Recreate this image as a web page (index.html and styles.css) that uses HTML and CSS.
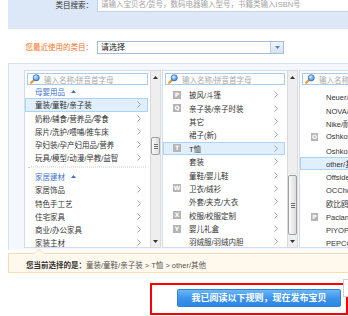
FILE: index.html
```html
<!DOCTYPE html>
<html lang="zh-CN">
<head>
<meta charset="utf-8">
<title>类目选择</title>
<link rel="stylesheet" href="styles.css">
</head>
<body>
<div class="page">
  <div class="search-bar">
    <span class="label">类目搜索：</span>
    <div class="search-input">请输入宝贝名/货号，数码电器输入型号，书籍类输入ISBN号</div>
  </div>

  <div class="recent">
    <span class="label orange">您最近使用的类目：</span>
    <div class="select">
      <span class="sel-text">请选择</span>
      <span class="sel-btn"><svg width="5" height="3" viewBox="0 0 5 3"><path d="M0 0H5L2.5 3Z" fill="#5b7fb3"/></svg></span>
    </div>
  </div>

  <div class="cat-panel">
    <div class="cols">
      <!-- column 1 -->
      <div class="col col1">
        <div class="list">
          <div class="finder">
            <svg class="lens" width="10" height="10" viewBox="0 0 10 10"><defs><radialGradient id="g1" cx="0.4" cy="0.35" r="0.7"><stop offset="0" stop-color="#d8eeff"/><stop offset="1" stop-color="#2f7dd6"/></radialGradient></defs><path d="M1.2 8.8L4.2 5.8" stroke="#e79a2a" stroke-width="2.2" stroke-linecap="round"/><circle cx="6.2" cy="3.8" r="3.1" fill="url(#g1)" stroke="#2a66b8" stroke-width="0.7"/></svg>
            <span>输入名称/拼音首字母</span>
          </div>
          <div class="items">
            <div class="group">母婴用品<svg class="up" width="5" height="3" viewBox="0 0 5 3"><path d="M0 3H5L2.5 0Z" fill="#3a6fd0"/></svg></div>
            <div class="item sel"><span>童装/童鞋/亲子装</span><i class="chev"></i></div>
            <div class="item"><span>奶粉/辅食/营养品/零食</span><i class="chev"></i></div>
            <div class="item"><span>尿片/洗护/喂哺/推车床</span><i class="chev"></i></div>
            <div class="item"><span>孕妇装/孕产妇用品/营养</span><i class="chev"></i></div>
            <div class="item"><span>玩具/模型/动漫/早教/益智</span><i class="chev"></i></div>
            <div class="sep"></div>
            <div class="group">家居建材<svg class="up" width="5" height="3" viewBox="0 0 5 3"><path d="M0 3H5L2.5 0Z" fill="#3a6fd0"/></svg></div>
            <div class="item"><span>家居饰品</span><i class="chev"></i></div>
            <div class="item"><span>特色手工艺</span><i class="chev"></i></div>
            <div class="item"><span>住宅家具</span><i class="chev"></i></div>
            <div class="item"><span>商业/办公家具</span><i class="chev"></i></div>
            <div class="item"><span>家装主材</span><i class="chev"></i></div>
          </div>
        </div>
        <div class="sb">
          <div class="sb-arrow"><svg width="5" height="3" viewBox="0 0 5 3"><path d="M0 3H5L2.5 0Z" fill="#333"/></svg></div>
          <div class="sb-gap gap-a"></div>
          <div class="thumb thumb-a"><i></i><i></i><i></i></div>
          <div class="sb-arrow down"><svg width="5" height="3" viewBox="0 0 5 3"><path d="M0 0H5L2.5 3Z" fill="#333"/></svg></div>
        </div>
      </div>

      <!-- column 2 -->
      <div class="col col2">
        <div class="list">
          <div class="finder">
            <svg class="lens" width="10" height="10" viewBox="0 0 10 10"><defs><radialGradient id="g2" cx="0.4" cy="0.35" r="0.7"><stop offset="0" stop-color="#d8eeff"/><stop offset="1" stop-color="#2f7dd6"/></radialGradient></defs><path d="M1.2 8.8L4.2 5.8" stroke="#e79a2a" stroke-width="2.2" stroke-linecap="round"/><circle cx="6.2" cy="3.8" r="3.1" fill="url(#g2)" stroke="#2a66b8" stroke-width="0.7"/></svg>
            <span>输入名称/拼音首字母</span>
          </div>
          <div class="items">
            <div class="item"><b class="badge">P</b><span>披风/斗篷</span><i class="chev"></i></div>
            <div class="item"><b class="badge">Q</b><span>亲子装/亲子时装</span><i class="chev"></i></div>
            <div class="item"><b class="badge blank"></b><span>其它</span><i class="chev"></i></div>
            <div class="item"><b class="badge blank"></b><span>裙子(新)</span><i class="chev"></i></div>
            <div class="item sel"><b class="badge">T</b><span>T恤</span><i class="chev"></i></div>
            <div class="item"><b class="badge blank"></b><span>套装</span><i class="chev"></i></div>
            <div class="item"><b class="badge blank"></b><span>童鞋/婴儿鞋</span><i class="chev"></i></div>
            <div class="item"><b class="badge">W</b><span>卫衣/绒衫</span><i class="chev"></i></div>
            <div class="item"><b class="badge blank"></b><span>外套/夹克/大衣</span><i class="chev"></i></div>
            <div class="item"><b class="badge">X</b><span>校服/校服定制</span><i class="chev"></i></div>
            <div class="item"><b class="badge">Y</b><span>婴儿礼盒</span><i class="chev"></i></div>
            <div class="item"><b class="badge blank"></b><span>羽绒服/羽绒内胆</span><i class="chev"></i></div>
          </div>
        </div>
        <div class="sb">
          <div class="sb-arrow"><svg width="5" height="3" viewBox="0 0 5 3"><path d="M0 3H5L2.5 0Z" fill="#333"/></svg></div>
          <div class="sb-gap gap-b"></div>
          <div class="thumb thumb-b"><i></i><i></i><i></i></div>
          <div class="sb-arrow down"><svg width="5" height="3" viewBox="0 0 5 3"><path d="M0 0H5L2.5 3Z" fill="#333"/></svg></div>
        </div>
      </div>

      <!-- column 3 -->
      <div class="col col3">
        <div class="list">
          <div class="finder">
            <svg class="lens" width="10" height="10" viewBox="0 0 10 10"><defs><radialGradient id="g3" cx="0.4" cy="0.35" r="0.7"><stop offset="0" stop-color="#d8eeff"/><stop offset="1" stop-color="#2f7dd6"/></radialGradient></defs><path d="M1.2 8.8L4.2 5.8" stroke="#e79a2a" stroke-width="2.2" stroke-linecap="round"/><circle cx="6.2" cy="3.8" r="3.1" fill="url(#g3)" stroke="#2a66b8" stroke-width="0.7"/></svg>
            <span>输入名称/拼音首字母</span>
          </div>
          <div class="items">
            <div class="item"><b class="badge blank"></b><span>Neuer/纽尔</span></div>
            <div class="item"><b class="badge blank"></b><span>NOVA/诺瓦</span></div>
            <div class="item"><b class="badge blank"></b><span>Nike/耐克</span></div>
            <div class="item"><b class="badge">O</b><span>Oshkosh B'gosh</span></div>
            <div class="item"><b class="badge blank"></b><span>Oshkosh/奥仕</span></div>
            <div class="item sel"><b class="badge blank"></b><span>other/其他</span></div>
            <div class="item"><b class="badge blank"></b><span>Offside</span></div>
            <div class="item"><b class="badge blank"></b><span>OCChon</span></div>
            <div class="item"><b class="badge blank"></b><span>欧比鸥</span></div>
            <div class="item"><b class="badge">P</b><span>Paclantic</span></div>
            <div class="item"><b class="badge blank"></b><span>PIYOPIYO</span></div>
            <div class="item"><b class="badge blank"></b><span>PEPCO</span></div>
          </div>
        </div>
      </div>
    </div>
  </div>

  <div class="current">
    <b>您当前选择的是：</b><span class="path">童装/童鞋/亲子装 &gt; T恤 &gt; other/其他</span>
  </div>

  <div class="actions">
    <div class="red-box">
      <button class="publish" type="button">我已阅读以下规则，现在发布宝贝</button>
    </div>
  </div>
  <div class="side-tab"></div>
</div>
</body>
</html>
```

FILE: styles.css
```css
* { box-sizing: border-box; margin: 0; padding: 0; }
html, body { width: 348px; height: 316px; overflow: hidden; background: #fff; }
body {
  font-family: "Liberation Sans", "Noto Sans CJK SC", sans-serif;
  font-size: 7.5px;
  color: #333;
}
.page { position: relative; padding-left: 8px; height: 316px; overflow: hidden; }

/* top search */
.search-bar {
  height: 29px;
  background: #dce7f7;
  display: flex;
  align-items: flex-start;
}
.label {
  flex: none;
  width: 87px;
  padding-right: 2px;
  text-align: right;
  line-height: 12px;
  white-space: nowrap;
}
.label.orange { color: #f7721c; line-height: 13px; }
.search-input {
  flex: none;
  margin-left: 2px;
  width: 270px;
  height: 12px;
  background: #fff;
  border: 1px solid #c3d3e8;
  border-top: none;
  padding-left: 3px;
  line-height: 10px;
  color: #a3a3a3;
  white-space: nowrap;
}

/* recent */
.recent {
  margin-top: 12px;
  display: flex;
  align-items: center;
  height: 13px;
}
.select {
  flex: none;
  margin-left: 2px;
  width: 187px;
  height: 13px;
  border: 1px solid #a9bcd6;
  background: #fff;
  display: flex;
  justify-content: space-between;
}
.sel-text { padding-left: 3px; line-height: 11px; color: #222; font-size: 8px; }
.sel-btn {
  width: 13px;
  height: 11px;
  background: linear-gradient(#f0f5fb, #d5e1f1);
  border-left: 1px solid #bccde2;
  display: flex;
  align-items: center;
  justify-content: center;
}

/* category panel */
.cat-panel {
  margin-top: 9px;
  border-top: 1px solid #d6e1ef;
  border-left: 1px solid #d6e1ef;
  background: #f4f7fc;
  padding: 6px 0 2px 15px;
}
.cols { display: flex; gap: 1px; height: 178px; }
.col { display: flex; flex: none; height: 178px; }
.list {
  background: #fff;
  border: 1px solid #d2dcea;
  border-right: none;
  overflow: hidden;
  height: 178px;
}
.col1 .list { width: 126px; }
.col2 .list { width: 125px; }
.col3 .list { width: 110px; }

.finder {
  margin: 2px 2px 0 2px;
  height: 12px;
  border: 1px solid #a9c9ee;
  display: flex;
  align-items: center;
  color: #a8a8a8;
  white-space: nowrap;
  overflow: hidden;
}
.lens { flex: none; margin: 0 4px 0 2px; }

.items { display: flex; flex-direction: column; }
.col2 .items { padding-top: 3px; }
.col3 .items { padding-top: 5px; }

.item, .group {
  height: 13.4px;
  display: flex;
  align-items: center;
  padding: 0 9px 0 10px;
  white-space: nowrap;
  flex: none;
}
.col1 .item, .col1 .group { height: 13.25px; }
.item span { flex: 1; overflow: hidden; }
.group { color: #3a6fd0; }
.up { margin-left: 6px; }
.item.sel {
  background: #e1effc;
  border: 1px solid #abd3f5;
  margin-right: 2px;
  padding-left: 9px;
  padding-right: 6px;
}
.chev {
  flex: none;
  width: 4px;
  height: 7px;
  background: no-repeat center / 4px 7px url("data:image/svg+xml,%3Csvg xmlns='http://www.w3.org/2000/svg' width='4' height='7' viewBox='0 0 4 7'%3E%3Cpath d='M0.5 0.5L3.5 3.5L0.5 6.5' fill='none' stroke='%23999' stroke-width='0.9'/%3E%3C/svg%3E");
}
.sep {
  flex: none;
  height: 5.6px;
  margin: 0 4px 0 3px;
  border-bottom: 1px dotted #c8c8c8;
  transform: translateY(-2.5px);
}

.col2 .item { padding-left: 10px; }
.col2 .item.sel { padding-left: 9px; }
.col3 .item { padding-left: 11px; }
.col3 .item.sel { padding-left: 10px; margin-right: 0; border-right: none; }
.badge {
  flex: none;
  width: 8px;
  height: 8px;
  margin-right: 8px;
  background: #b4b4b4;
  color: #fff;
  font-size: 6px;
  font-weight: bold;
  line-height: 8px;
  text-align: center;
  font-family: "DejaVu Sans", sans-serif;
}
.badge.blank { background: none; }
.col3 .badge { width: 7px; margin-right: 8px; }

/* scrollbar */
.sb {
  width: 11px;
  height: 178px;
  background: #eeeeee;
  border: 1px solid #dadada;
  display: flex;
  flex-direction: column;
  align-items: center;
}
.sb-arrow {
  flex: none;
  width: 9px;
  height: 12px;
  display: flex;
  align-items: center;
  justify-content: center;
}
.sb-arrow.down { margin-top: auto; height: 11px; }
.sb-gap { flex: none; }
.gap-a { height: 54px; }
.gap-b { height: 92px; }
.thumb {
  flex: none;
  width: 9px;
  background: linear-gradient(to right, #fafafa, #dcdcdc);
  border: 1px solid #a0a0a0;
  border-radius: 2px;
  display: flex;
  flex-direction: column;
  align-items: center;
  justify-content: center;
  gap: 1px;
}
.thumb i { display: block; width: 4px; height: 1px; background: #6f6f6f; }
.thumb-a { height: 18px; }
.thumb-b { height: 60px; }

/* current selection */
.current {
  position: relative;
  margin-top: 3px;
  height: 20px;
  background: #fff8ec;
  border: 1px solid #fbdcb2;
  border-right: none;
  padding: 3px 0 0 17px;
  display: flex;
  align-items: center;
  white-space: nowrap;
}
.current b { color: #333; }
.current .path { color: #555; }
.current::before, .current::after {
  content: "";
  position: absolute;
  left: 25px;
  top: -5px;
  border: 5px solid transparent;
  border-top: none;
  border-bottom: 4px solid #fbdcb2;
}
.current::after {
  top: -3.6px;
  border-bottom-color: #fff8ec;
}

/* action */
.actions { margin-top: 10px; padding-left: 142px; }
.red-box {
  width: 198px;
  border: 2px solid #f00;
  padding: 4px 0 6px 25px;
}
.publish {
  display: block;
  width: 164px;
  height: 18px;
  border: 1px solid #2f80d8;
  border-radius: 2px;
  background: linear-gradient(#6ab6f7, #3b92ea 55%, #2c86e4);
  color: #fff;
  font-family: "Noto Sans CJK SC", sans-serif;
  font-size: 9px;
  font-weight: bold;
  line-height: 16px;
  text-align: center;
}
.side-tab {
  position: absolute;
  right: -2px;
  top: 279px;
  width: 7px;
  height: 18px;
  border: 1px solid #d0d0d0;
  background: #fff;
}
```
